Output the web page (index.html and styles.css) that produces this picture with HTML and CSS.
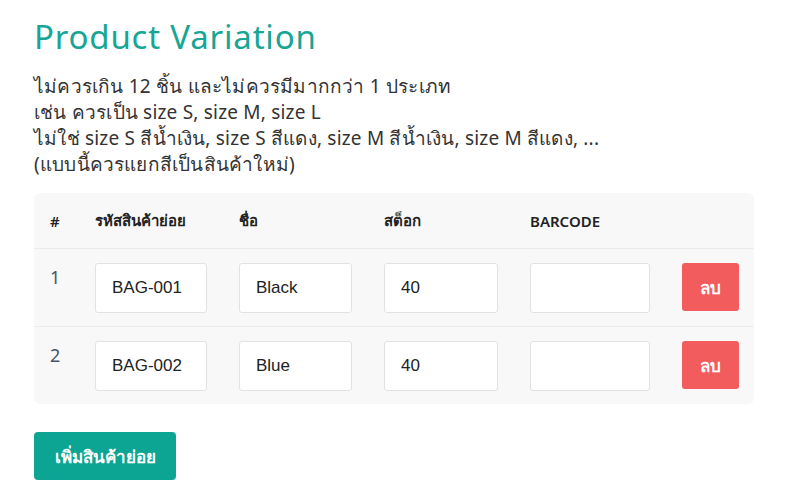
FILE: index.html
```html
<!DOCTYPE html>
<html lang="th">
<head>
  <meta charset="UTF-8" />
  <meta name="viewport" content="width=device-width, initial-scale=1.0" />
  <title>Product Variation</title>
  <link rel="stylesheet" href="styles.css">
</head>
<body>
  <main class="page">
    <h1 class="title">Product Variation</h1>
    <p class="note">
      ไม่ควรเกิน 12 ชิ้น และไม่ควรมีมากกว่า 1 ประเภท<br>
      เช่น ควรเป็น size S, size M, size L<br>
      ไม่ใช่ size S สีน้ำเงิน, size S สีแดง, size M สีน้ำเงิน, size M สีแดง, ...<br>
      (แบบนี้ควรแยกสีเป็นสินค้าใหม่)
    </p>

    <table class="variants">
      <thead>
        <tr>
          <th class="col-no">#</th>
          <th class="col-sku">รหัสสินค้าย่อย</th>
          <th class="col-name">ชื่อ</th>
          <th class="col-stock">สต็อก</th>
          <th class="col-barcode">BARCODE</th>
          <th class="col-action"></th>
        </tr>
      </thead>
      <tbody>
        <tr>
          <td class="num">1</td>
          <td><input type="text" value="BAG-001"></td>
          <td><input type="text" value="Black"></td>
          <td><input type="text" value="40"></td>
          <td><input type="text" value=""></td>
          <td><button class="btn-delete">ลบ</button></td>
        </tr>
        <tr>
          <td class="num">2</td>
          <td><input type="text" value="BAG-002"></td>
          <td><input type="text" value="Blue"></td>
          <td><input type="text" value="40"></td>
          <td><input type="text" value=""></td>
          <td><button class="btn-delete">ลบ</button></td>
        </tr>
      </tbody>
    </table>

    <button class="btn-add">เพิ่มสินค้าย่อย</button>
  </main>
</body>
</html>
```

FILE: styles.css
```css
body {
  margin: 0;
  padding: 0;
  background-color: #fff;
  color: #333;
  font-family: 'Noto Sans', 'Liberation Sans', sans-serif;
}

.page {
  padding: 14px 34px;
}

.title {
  color: #17a596;
  font-size: 33px;
  font-weight: 400;
  margin: 0 0 14px;
  letter-spacing: 0.8px;
}

.note {
  font-size: 19px;
  line-height: 26px;
  letter-spacing: 0.2px;
  margin: 0 0 16px;
}

.variants {
  width: 720px;
  border-collapse: collapse;
  background-color: #f8f8f8;
  border-radius: 6px;
  overflow: hidden;
  table-layout: fixed;
}

.variants th {
  text-align: left;
  font-size: 15px;
  font-weight: 600;
  color: #222;
  padding: 0 16px;
  height: 55px;
}

.variants td {
  padding: 14px 16px 13px;
  border-top: 1px solid #e9ecef;
  vertical-align: top;
}

.col-no { width: 13px; }
.col-sku { width: 112px; }
.col-name { width: 113px; }
.col-stock { width: 114px; }
.col-barcode { width: 120px; }

.variants td.num {
  color: #4a5568;
  font-size: 18px;
  padding-top: 16px;
}

.variants input {
  box-sizing: border-box;
  width: 100%;
  height: 50px;
  border: 1px solid #e2e2e2;
  border-radius: 3px;
  background-color: #fff;
  padding: 0 16px;
  font-family: 'Liberation Sans', Arial, sans-serif;
  font-size: 17px;
  color: #222;
}

.btn-delete {
  background-color: #f25c5c;
  color: white;
  border: none;
  border-radius: 3px;
  width: 57px;
  height: 48px;
  font-size: 17px;
  font-weight: bold;
  font-family: inherit;
  cursor: pointer;
}

.btn-add {
  margin-top: 28px;
  background-color: #0ca593;
  color: white;
  border: none;
  border-radius: 4px;
  width: 142px;
  height: 48px;
  font-size: 17px;
  font-weight: bold;
  font-family: inherit;
  cursor: pointer;
}
```
